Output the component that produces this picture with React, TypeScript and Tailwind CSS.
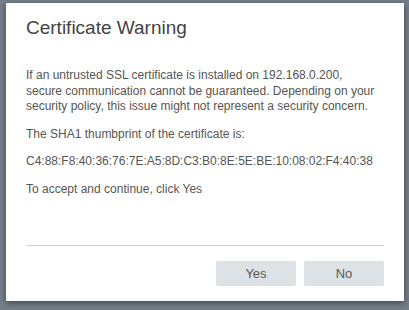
import React from "react";

export default function App() {
  return (
    <div
      className="w-[409px] h-[310px] bg-[#737e89] pl-[6px] pt-[3px] overflow-hidden"
      style={{ fontFamily: '"Liberation Sans", Arial, sans-serif' }}
    >
      <div className="w-[398px] h-[298px] bg-white shadow-[0_2px_6px_rgba(0,0,0,0.45)] flex flex-col px-[20px] pt-[13px]">
        <h1 className="text-[19px] leading-[24px] text-[#444] font-normal">Certificate Warning</h1>
        <div className="mt-[28px] text-[12px] leading-[15.5px] text-[#555] flex flex-col gap-[12px] whitespace-nowrap">
          <p>
            If an untrusted SSL certificate is installed on 192.168.0.200,
            <br />
            secure communication cannot be guaranteed. Depending on your
            <br />
            security policy, this issue might not represent a security concern.
          </p>
          <p>The SHA1 thumbprint of the certificate is:</p>
          <p>C4:88:F8:40:36:76:7E:A5:8D:C3:B0:8E:5E:BE:10:08:02:F4:40:38</p>
          <p>To accept and continue, click Yes</p>
        </div>
        <div className="mt-auto border-t border-[#cfd3d7]" />
        <div className="flex justify-end gap-[8px] pt-[15px] pb-[15px]">
          <button className="w-[80px] h-[25px] rounded-[2px] bg-[#dde2e7] text-[13px] text-[#555]">Yes</button>
          <button className="w-[80px] h-[25px] rounded-[2px] bg-[#dde2e7] text-[13px] text-[#555]">No</button>
        </div>
      </div>
    </div>
  );
}
